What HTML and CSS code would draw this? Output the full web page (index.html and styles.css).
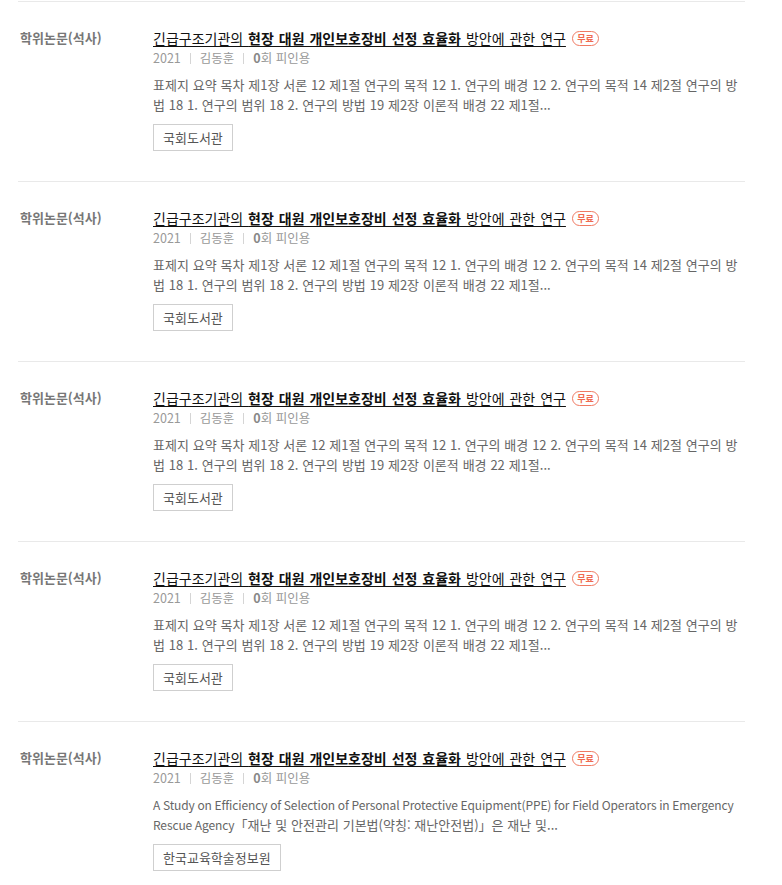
FILE: index.html
```html
<!DOCTYPE html>
<html lang="ko">
<head>
<meta charset="utf-8">
<title>검색 결과</title>
<link rel="stylesheet" href="styles.css">
</head>
<body>
<ul class="result-list">
  <li class="item">
    <div class="item-type">학위논문(석사)</div>
    <div class="item-body">
      <div class="title-row"><a class="title" href="#">긴급구조기관의 <b>현장 대원 개인보호장비 선정 효율화</b> 방안에 관한 연구</a><span class="badge">무료</span></div>
      <div class="meta"><span>2021</span><span class="sep"></span><span>김동훈</span><span class="sep"></span><span><b>0</b>회 피인용</span></div>
      <p class="abstract">표제지 요약 목차 제1장 서론 12 제1절 연구의 목적 12 1. 연구의 배경 12 2. 연구의 목적 14 제2절 연구의 방법 18 1. 연구의 범위 18 2. 연구의 방법 19 제2장 이론적 배경 22 제1절...</p>
      <div class="actions"><a class="source" href="#">국회도서관</a></div>
    </div>
  </li>
  <li class="item">
    <div class="item-type">학위논문(석사)</div>
    <div class="item-body">
      <div class="title-row"><a class="title" href="#">긴급구조기관의 <b>현장 대원 개인보호장비 선정 효율화</b> 방안에 관한 연구</a><span class="badge">무료</span></div>
      <div class="meta"><span>2021</span><span class="sep"></span><span>김동훈</span><span class="sep"></span><span><b>0</b>회 피인용</span></div>
      <p class="abstract">표제지 요약 목차 제1장 서론 12 제1절 연구의 목적 12 1. 연구의 배경 12 2. 연구의 목적 14 제2절 연구의 방법 18 1. 연구의 범위 18 2. 연구의 방법 19 제2장 이론적 배경 22 제1절...</p>
      <div class="actions"><a class="source" href="#">국회도서관</a></div>
    </div>
  </li>
  <li class="item">
    <div class="item-type">학위논문(석사)</div>
    <div class="item-body">
      <div class="title-row"><a class="title" href="#">긴급구조기관의 <b>현장 대원 개인보호장비 선정 효율화</b> 방안에 관한 연구</a><span class="badge">무료</span></div>
      <div class="meta"><span>2021</span><span class="sep"></span><span>김동훈</span><span class="sep"></span><span><b>0</b>회 피인용</span></div>
      <p class="abstract">표제지 요약 목차 제1장 서론 12 제1절 연구의 목적 12 1. 연구의 배경 12 2. 연구의 목적 14 제2절 연구의 방법 18 1. 연구의 범위 18 2. 연구의 방법 19 제2장 이론적 배경 22 제1절...</p>
      <div class="actions"><a class="source" href="#">국회도서관</a></div>
    </div>
  </li>
  <li class="item">
    <div class="item-type">학위논문(석사)</div>
    <div class="item-body">
      <div class="title-row"><a class="title" href="#">긴급구조기관의 <b>현장 대원 개인보호장비 선정 효율화</b> 방안에 관한 연구</a><span class="badge">무료</span></div>
      <div class="meta"><span>2021</span><span class="sep"></span><span>김동훈</span><span class="sep"></span><span><b>0</b>회 피인용</span></div>
      <p class="abstract">표제지 요약 목차 제1장 서론 12 제1절 연구의 목적 12 1. 연구의 배경 12 2. 연구의 목적 14 제2절 연구의 방법 18 1. 연구의 범위 18 2. 연구의 방법 19 제2장 이론적 배경 22 제1절...</p>
      <div class="actions"><a class="source" href="#">국회도서관</a></div>
    </div>
  </li>
  <li class="item">
    <div class="item-type">학위논문(석사)</div>
    <div class="item-body">
      <div class="title-row"><a class="title" href="#">긴급구조기관의 <b>현장 대원 개인보호장비 선정 효율화</b> 방안에 관한 연구</a><span class="badge">무료</span></div>
      <div class="meta"><span>2021</span><span class="sep"></span><span>김동훈</span><span class="sep"></span><span><b>0</b>회 피인용</span></div>
      <p class="abstract"><span class="en" lang="en">A Study on Efficiency of Selection of Personal Protective Equipment(PPE) for Field Operators in Emergency Rescue Agency</span>「재난 및 안전관리 기본법(약칭: 재난안전법)」은 재난 및...</p>
      <div class="actions"><a class="source" href="#">한국교육학술정보원</a></div>
    </div>
  </li>
</ul>
</body>
</html>
```

FILE: styles.css
```css
* { box-sizing: border-box; }

html, body {
  margin: 0;
  padding: 0;
  background: #fff;
}

body {
  font-family: "Noto Sans CJK KR", "Noto Sans", sans-serif;
  color: #555;
}

.result-list {
  list-style: none;
  margin: 1px 0 0 18px;
  padding: 0;
  width: 727px;
}

.item {
  display: flex;
  border-top: 1px solid #e9e9e9;
  padding: 26px 0 30px 2px;
}

.item-type {
  flex: 0 0 133px;
  font-size: 13px;
  font-weight: bold;
  line-height: 20px;
  color: #777;
}

.item-body {
  flex: 1;
  min-width: 0;
}

.title-row {
  display: flex;
  align-items: center;
  height: 20px;
}

.title {
  font-size: 14px;
  word-spacing: 1px;
  line-height: 20px;
  color: #111;
  text-decoration: underline;
  text-underline-offset: 2px;
}

.title b { font-weight: bold; }

.badge {
  display: inline-flex;
  align-items: center;
  justify-content: center;
  margin-left: 6px;
  width: 27px;
  height: 15px;
  border: 1px solid #f07a63;
  border-radius: 8px;
  color: #ef6a50;
  font-size: 9px;
  font-weight: bold;
  line-height: 1;
}

.meta {
  display: flex;
  align-items: center;
  font-size: 12.5px;
  line-height: 20px;
  color: #999;
}

.meta b { font-weight: bold; color: #888; }

.sep {
  width: 1px;
  height: 11px;
  background: #d5d5d5;
  margin: 0 9px 0 9px;
}

.abstract {
  margin: 7px 0 0;
  font-size: 13px;
  word-spacing: 0.2px;
  line-height: 20px;
  color: #666;
  padding-right: 4px;
}

.abstract .en {
  font-size: 12px;
  letter-spacing: -0.12px;
  line-height: 20px;
}

.actions {
  margin-top: 9px;
  display: flex;
}

.source {
  display: inline-block;
  height: 27px;
  line-height: 25px;
  padding: 0 9px;
  border: 1px solid #cfcfcf;
  font-size: 13px;
  color: #555;
  text-decoration: none;
}
```
